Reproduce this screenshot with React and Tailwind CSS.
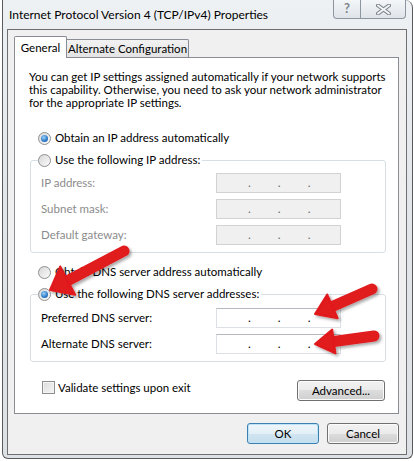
const ARROWS = [
  { tail: [124, 251], tip: [50, 290], head: 20, spread: 16 },
  { tail: [372, 289], tip: [315, 314], head: 19, spread: 13 },
  { tail: [374, 336], tip: [315, 344], head: 19, spread: 12 },
];

export default function App() {
  return (
    <div className="relative w-[414px] h-[461px] bg-white overflow-hidden font-[Lato,sans-serif] text-[11.5px] text-black">
      <div className="ml-[2px] w-[411px] h-[459px] flex flex-col rounded-b-[6px] rounded-tr-[8px] border border-t-0 border-[#5a5a5a] bg-[linear-gradient(180deg,#eef1f4_0%,#e3e7eb_40%,#dde1e5_100%)]">
        <TitleBar />
        <div className="ml-[4px] w-[400px] h-[426px] border border-[#6f6f6f] bg-[#f0f0f0] flex flex-col">
          <div className="pl-[6px] pt-[6px]">
            <Tabs />
            <Panel />
          </div>
          <div className="flex justify-end gap-[8px] pr-[7px] mt-[9px]">
            <Button primary className="w-[72px]">OK</Button>
            <Button className="w-[72px]">Cancel</Button>
          </div>
        </div>
      </div>

      <svg className="absolute inset-0 pointer-events-none" width="414" height="461">
        <defs>
          <filter id="shadow" x="-20%" y="-20%" width="140%" height="140%">
            <feDropShadow dx="2" dy="2" stdDeviation="1.5" floodColor="#000" floodOpacity="0.35" />
          </filter>
        </defs>
        {ARROWS.map((a, i) => (
          <Arrow key={i} {...a} />
        ))}
      </svg>
    </div>
  );
}

function TitleBar() {
  return (
    <div className="h-[29px] flex items-start justify-between">
      <span className="pl-[6px] pt-[7px] text-[12px] leading-[16px] text-black">
        Internet Protocol Version 4 (TCP/IPv4) Properties
      </span>
      <div className="flex mr-[6px]">
        <div className="w-[28px] h-[19px] flex items-center justify-center rounded-bl-[4px] border border-t-0 border-[#8c96a0] bg-[linear-gradient(180deg,#f4f6f8,#dfe4e9)] text-[13px] font-bold text-[#7e858c]">
          ?
        </div>
        <div className="w-[45px] h-[19px] flex items-center justify-center rounded-br-[4px] border border-l-0 border-t-0 border-[#8c96a0] bg-[linear-gradient(180deg,#f4f6f8,#dfe4e9)]">
          <svg width="15" height="11" viewBox="0 0 15 11">
            <path d="M2 1.5 L13 9.5 M13 1.5 L2 9.5" stroke="#7b848c" strokeWidth="4" strokeLinecap="round" />
            <path d="M2 1.5 L13 9.5 M13 1.5 L2 9.5" stroke="#f4f6f8" strokeWidth="2" strokeLinecap="round" />
          </svg>
        </div>
      </div>
    </div>
  );
}

function Tabs() {
  return (
    <div className="flex items-end h-[21px] whitespace-nowrap">
      <div className="relative z-10 w-[53px] h-[22px] -mb-px flex items-center justify-center border border-b-0 border-[#898c95] rounded-t-[2px] bg-white">
        General
      </div>
      <div className="w-[122px] h-[18px] flex items-center justify-center border border-l-0 border-b-0 border-[#898c95] rounded-tr-[2px] bg-[linear-gradient(180deg,#f2f2f2,#e3e3e3)]">
        Alternate Configuration
      </div>
    </div>
  );
}

function Panel() {
  return (
    <div className="w-[385px] h-[357px] border border-[#898c95] bg-white flex flex-col">
      <p className="ml-[14px] mt-[12px] leading-[13px] whitespace-nowrap">
        You can get IP settings assigned automatically if your network supports
        <br />
        this capability. Otherwise, you need to ask your network administrator
        <br />
        for the appropriate IP settings.
      </p>

      <div className="ml-[23px] mt-[21px]">
        <Radio checked label="Obtain an IP address automatically" />
      </div>

      <fieldset className="ml-[15px] mt-[6px] w-[356px] border border-[#d5dfe5] rounded-[3px] pb-[7px]">
        <legend className="ml-[7px] pr-[2px]">
          <Radio label="Use the following IP address:" />
        </legend>
        <div className="flex flex-col gap-[6px] mt-[5px]">
          <IpRow label="IP address:" disabled />
          <IpRow label="Subnet mask:" disabled />
          <IpRow label="Default gateway:" disabled />
        </div>
      </fieldset>

      <div className="ml-[23px] mt-[11px]">
        <Radio label="Obtain DNS server address automatically" />
      </div>

      <fieldset className="ml-[15px] mt-[6px] w-[356px] border border-[#d5dfe5] rounded-[3px] pb-[7px]">
        <legend className="ml-[7px] pr-[2px]">
          <Radio checked label="Use the following DNS server addresses:" />
        </legend>
        <div className="flex flex-col gap-[6px] mt-[6px]">
          <IpRow label="Preferred DNS server:" />
          <IpRow label="Alternate DNS server:" />
        </div>
      </fieldset>

      <div className="flex items-start justify-between mt-[18px] ml-[27px] mr-[13px]">
        <label className="flex items-center gap-[3px] h-[14px] mt-[0.5px]">
          <span className="w-[13px] h-[13px] border border-[#8e8f8f] bg-[linear-gradient(135deg,#dcdcdc,#f6f6f6)] shadow-[inset_0_0_0_1px_#f4f4f4]" />
          Validate settings upon exit
        </label>
        <Button className="w-[88px]">Advanced...</Button>
      </div>
    </div>
  );
}

function Radio({ checked, label }) {
  return (
    <label className="flex items-center gap-[4px] h-[16px] whitespace-nowrap">
      <span className="w-[13px] h-[13px] rounded-full border border-[#8e8f8f] bg-[linear-gradient(135deg,#d7d7d7,#fbfbfb)] flex items-center justify-center">
        {checked && (
          <span className="w-[7px] h-[7px] rounded-full bg-[radial-gradient(circle_at_40%_35%,#9fd3f5,#2a78c8_60%,#1b4f94)]" />
        )}
      </span>
      {label}
    </label>
  );
}

function IpRow({ label, disabled }) {
  return (
    <div className="flex items-center h-[20px] pl-[10px]">
      <span className={"w-[175px] " + (disabled ? "text-[#8c8c8c]" : "text-black")}>{label}</span>
      <div
        className={
          "w-[125px] h-[20px] border flex items-center text-[12px] leading-none " +
          (disabled
            ? "bg-[#f0f0f0] border-[#d2d2d2] text-[#6d6d6d]"
            : "bg-white border-[#dcdfe3] border-t-[#b5b8bd] text-black")
        }
      >
        <span className="ml-[31px]">.</span>
        <span className="ml-[27px]">.</span>
        <span className="ml-[27px]">.</span>
      </div>
    </div>
  );
}

function Button({ primary, className = "", children }) {
  return (
    <button
      className={
        "h-[21px] rounded-[3px] border text-[11.5px] leading-none text-black " +
        (primary
          ? "border-[#3c7fb1] shadow-[inset_0_0_0_1px_#bfe3f8] bg-[linear-gradient(180deg,#eef6fb_0%,#e3eff7_50%,#d2e5f1_50%,#c5ddec_100%)] "
          : "border-[#707070] shadow-[inset_0_0_0_1px_#fbfbfb] bg-[linear-gradient(180deg,#f2f2f2_0%,#ebebeb_50%,#dddddd_50%,#cfcfcf_100%)] ") +
        className
      }
    >
      {children}
    </button>
  );
}

function Arrow({ tail, tip, head, spread }) {
  const [tx, ty] = tail;
  const [px, py] = tip;
  const len = Math.hypot(px - tx, py - ty);
  const ux = (px - tx) / len;
  const uy = (py - ty) / len;
  const nx = -uy;
  const ny = ux;
  const bx = px - ux * head;
  const by = py - uy * head;
  const pts = [
    [px, py],
    [bx + nx * spread, by + ny * spread],
    [bx - nx * spread, by - ny * spread],
  ]
    .map((p) => p.join(","))
    .join(" ");

  return (
    <g filter="url(#shadow)">
      <line x1={tx} y1={ty} x2={bx + ux * 2} y2={by + uy * 2} stroke="#e01a1f" strokeWidth="11" strokeLinecap="round" />
      <polygon points={pts} fill="#e01a1f" stroke="#e01a1f" strokeWidth="2" strokeLinejoin="round" />
    </g>
  );
}
